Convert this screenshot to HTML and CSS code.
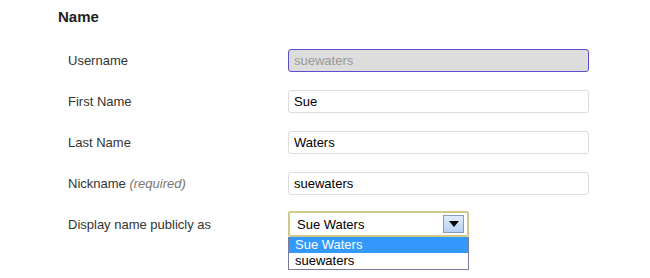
FILE: index.html
```html
<!DOCTYPE html>
<html>
  <head>
    <title>Profile - Name</title>
    <link rel="stylesheet" href="styles.css">
  </head>
  <body>
    <h3 class="section-title">Name</h3>

    <!-- Name fields -->
    <div class="form-table">
      <div class="form-row">
        <label class="field-label">Username</label>
        <input class="field-input disabled" type="text" value="suewaters" disabled>
      </div>
      <div class="form-row">
        <label class="field-label">First Name</label>
        <input class="field-input" type="text" value="Sue">
      </div>
      <div class="form-row">
        <label class="field-label">Last Name</label>
        <input class="field-input" type="text" value="Waters">
      </div>
      <div class="form-row">
        <label class="field-label">Nickname <span class="hint">(required)</span></label>
        <input class="field-input" type="text" value="suewaters">
      </div>
      <div class="form-row">
        <label class="field-label">Display name publicly as</label>
        <div class="select-wrap">
          <div class="select-box">
            <span>Sue Waters</span>
            <span class="select-arrow">
              <svg width="12" height="8" viewBox="0 0 12 8"><path d="M1 1h10L6 7z" fill="#000"/></svg>
            </span>
          </div>
          <!-- Open dropdown list -->
          <ul class="select-list">
            <li class="selected">Sue Waters</li>
            <li>suewaters</li>
          </ul>
        </div>
      </div>
    </div>
  </body>
</html>
```

FILE: styles.css
```css
body {
  margin: 0;
  min-height: 278px;
  background-color: #fff;
  font-family: "Liberation Sans", Arial, sans-serif;
  color: #333;
}

.section-title {
  margin: 0;
  padding: 8px 0 0 58px;
  font-size: 15px;
  font-weight: bold;
  color: #222;
}

.form-table {
  display: flex;
  flex-direction: column;
  gap: 18px;
  padding-top: 24px;
  padding-left: 68px;
}

.form-row {
  display: flex;
  align-items: flex-start;
}

.field-label {
  width: 220px;
  font-size: 13px;
  line-height: 16px;
  padding-top: 4px;
  color: #333;
}

.hint {
  font-style: italic;
  color: #777;
}

.field-input {
  box-sizing: border-box;
  width: 301px;
  height: 23px;
  margin: 0;
  padding: 0 5px;
  border: 1px solid #dcdcdc;
  border-radius: 3px;
  font-family: "Liberation Sans", Arial, sans-serif;
  font-size: 13px;
  color: #000;
  background-color: #fff;
}

.field-input.disabled {
  background-color: #ddd;
  border-color: #5a4fcf;
  color: #999;
}

.select-wrap {
  width: 181px;
  margin-top: -2px;
}

.select-box {
  box-sizing: border-box;
  display: flex;
  align-items: center;
  justify-content: space-between;
  height: 26px;
  padding: 0 3px 0 7px;
  border: 2px solid #cfc98a;
  border-radius: 2px;
  font-size: 13px;
  color: #000;
}

.select-arrow {
  box-sizing: border-box;
  display: flex;
  align-items: center;
  justify-content: center;
  width: 21px;
  height: 18px;
  border: 1px solid #7f9db9;
  background: linear-gradient(#e0ecfc, #b6d0f3);
}

.select-list {
  box-sizing: border-box;
  margin: 0;
  padding: 0;
  list-style: none;
  border: 1px solid #7a7a9a;
  border-top: none;
  font-size: 13px;
  color: #000;
}

.select-list li {
  height: 16px;
  line-height: 16px;
  padding-left: 6px;
}

.select-list li.selected {
  background-color: #3399ff;
  color: #fff;
}
```
